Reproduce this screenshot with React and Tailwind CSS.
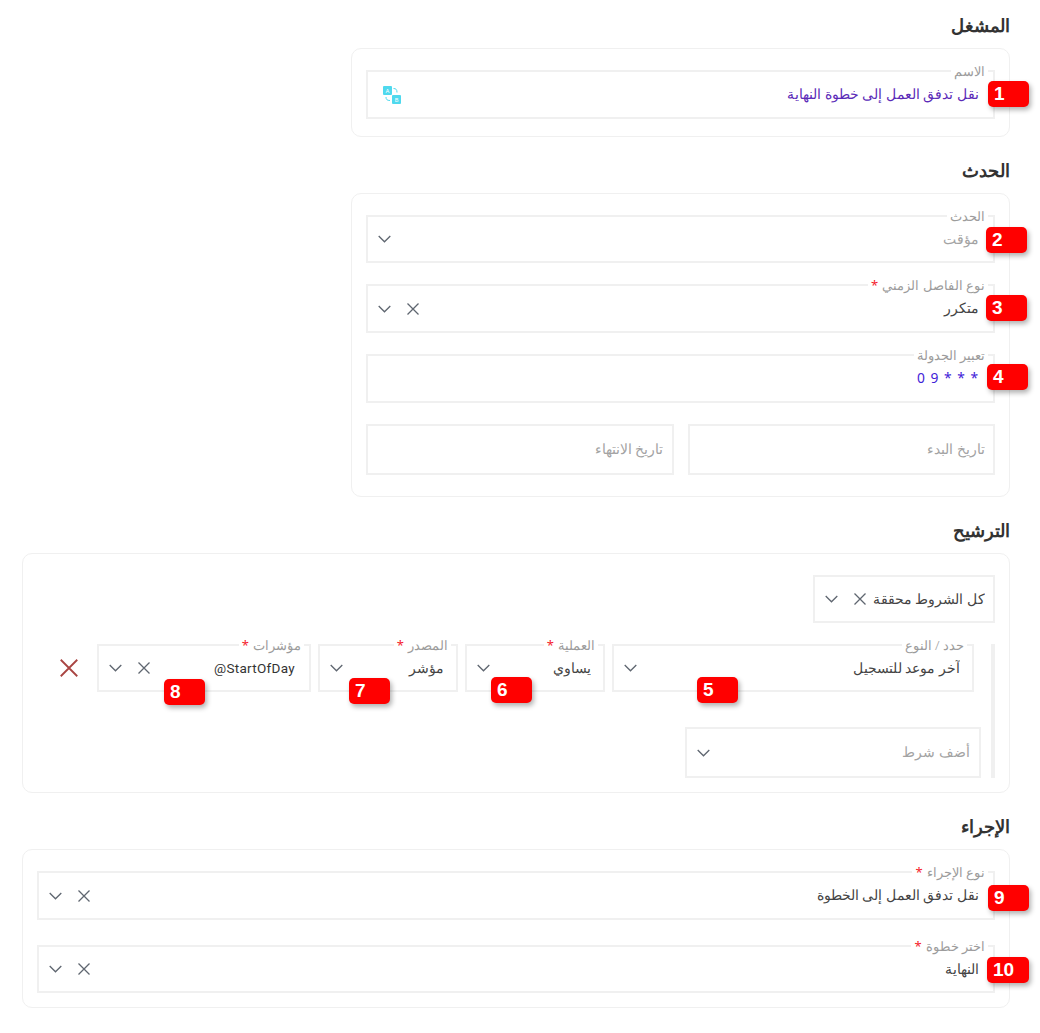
import React from "react";

const Chevron = () => (
  <svg width="13" height="8" viewBox="0 0 13 8" fill="none" className="shrink-0 text-[#5f6670]">
    <path d="M0.7 1l5.800 5.800L12.300 1" stroke="currentColor" strokeWidth="1.3" />
  </svg>
);

const Cross = ({ size = 12, className = "text-[#5f6670]", width = 1.3 }) => (
  <svg width={size} height={size} viewBox="0 0 12 12" fill="none" className={`shrink-0 ${className}`}>
    <path d="M0.5 0.5l11 11M11.5 0.5l-11 11" stroke="currentColor" strokeWidth={width} />
  </svg>
);

const TranslateIcon = () => (
  <svg width="18" height="18" viewBox="0 0 18 18" fill="none" className="shrink-0">
    <rect x="0" y="0" width="9" height="9" rx="1" fill="#4fd9ee" />
    <rect x="9" y="9" width="9" height="9" rx="1" fill="#4fd9ee" />
    <text x="4.5" y="6.500" fontSize="6" fill="#fff" textAnchor="middle" fontFamily="Roboto">A</text>
    <text x="13.5" y="15.500" fontSize="6" fill="#fff" textAnchor="middle" fontFamily="Roboto">B</text>
    <path d="M10.500 2.500c2.500 0 3.500 1 3.500 4M3 11c0 2.500 1 3.500 4 3.500" stroke="#4fd9ee" strokeWidth="1" />
  </svg>
);

const Badge = ({ n, className }) => (
  <div dir="ltr" className={`absolute z-10 h-[26px] rounded-[5px] bg-[#ff0000] pl-[6px] text-left text-[19px] font-bold leading-[25px] text-white shadow-[2px_3px_5px_rgba(0,0,0,0.3)] font-['Liberation_Sans',sans-serif] ${className}`}>
    {n}
  </div>
);

const Field = ({ label, required, value, valueClass = "text-[#444444]", clear, chevron = true, badge, badgeClass, height = "h-[49px]", width = "", pad = "pr-[14px]", children }) => (
  <div className={`relative flex items-center border-2 border-[#f0f0f0] pl-[10px] ${pad} ${height} ${width}`}>
    {label && (
      <span className="absolute -top-[10px] right-[5px] bg-white px-[3px] text-[13px] font-light leading-[18px] text-[#9c9c9c]">
        {label}
        {required && <span className="mr-[4px] font-normal text-[#f5222d]">*</span>}
      </span>
    )}
    <div className={`flex-1 truncate text-[13.800px] font-light ${valueClass}`}>{value}</div>
    {children}
    {clear && <span className="ml-4"><Cross /></span>}
    {chevron && <Chevron />}
    {badge && <Badge n={badge} className={badgeClass} />}
  </div>
);

const Section = ({ title, narrow, className, children }) => (
  <section className={narrow ? "w-[659px]" : "w-full"}>
    <h2 className="mb-[11px] h-[24px] text-[18px] font-bold leading-[24px] text-[#333333]">{title}</h2>
    <div className={`rounded-[10px] border border-[#f0f0f0] px-[14px] ${className}`}>{children}</div>
  </section>
);

export default function App() {
  return (
    <div dir="rtl" className="flex min-h-[1033px] w-[1040px] flex-col gap-[21px] bg-white pl-[22px] pr-[30px] pt-[13px] font-['Noto_Sans',Roboto,sans-serif]">
      <Section title="المشغل" narrow className="pb-[17px] pt-[21px]">
        <Field
          label="الاسم"
          value="نقل تدفق العمل إلى خطوة النهاية"
          valueClass="text-[#5b2bb8]"
          chevron={false}
          badge="1"
          badgeClass="-right-[36px] top-[9px] w-[41px]"
        >
          <span className="ml-[5px]"><TranslateIcon /></span>
        </Field>
      </Section>

      <Section title="الحدث" narrow className="flex flex-col gap-[21px] pb-[21px] pt-[21px]">
        <Field label="الحدث" value="مؤقت" valueClass="text-[#a3a3a3]" height="h-[48px]" badge="2" badgeClass="-right-[34px] top-[10px] w-[41px]" />
        <Field label="نوع الفاصل الزمني" required value="متكرر" clear badge="3" badgeClass="-right-[34px] top-[9px] w-[41px]" />
        <Field
          label="تعبير الجدولة"
          value={<span dir="ltr" className="font-normal tracking-[1px]">0 9 * * *</span>}
          valueClass="text-[#3f22d8]"
          chevron={false}
          badge="4"
          badgeClass="-right-[35px] top-[8px] w-[41px]"
        />
        <div className="grid grid-cols-2 gap-[14px]">
          <Field value="تاريخ البدء" valueClass="text-[#a3a3a3]" chevron={false} height="h-[51px]" pad="pr-[8px]" />
          <Field value="تاريخ الانتهاء" valueClass="text-[#a3a3a3]" chevron={false} height="h-[51px]" pad="pr-[8px]" />
        </div>
      </Section>

      <Section title="الترشيح" className="pb-[14px] pt-[21px]">
        <div className="flex">
          <Field value="كل الشروط محققة" clear height="h-[48px]" width="w-[182px]" pad="pr-[8px]" />
        </div>
        <div className="mt-[21px] border-r-[4px] border-[#f0f0f0] pr-[10px]">
          <div className="mr-[7px] flex items-center gap-[7px]">
            <Field label="حدد / النوع" value="آخر موعد للتسجيل" height="h-[48px]" width="w-[362px]" pad="pr-[12px]" badge="5" badgeClass="left-[83px] top-[31px] w-[41px]" />
            <Field label="العملية" required value="يساوي" height="h-[48px]" width="w-[140px]" pad="pr-[12px]" badge="6" badgeClass="left-[24px] top-[31px] w-[41px]" />
            <Field label="المصدر" required value="مؤشر" height="h-[48px]" width="w-[140px]" pad="pr-[12px]" badge="7" badgeClass="left-[29px] top-[32px] w-[41px]" />
            <Field
              label="مؤشرات"
              required
              value={<span dir="ltr" className="font-['Roboto',sans-serif] text-[13.500px] font-normal tracking-[0.3px] text-[#333333]">@StartOfDay</span>}
              clear
              height="h-[48px]"
              width="w-[214px]"
              pad="pr-[14px]"
              badge="8"
              badgeClass="left-[65px] top-[33px] w-[41px]"
            />
            <span className="mr-[12px]"><Cross size={18} width={1.2} className="text-[#a94442]" /></span>
          </div>
          <div className="mt-[35px] flex">
            <Field value="أضف شرط" valueClass="text-[#a3a3a3]" height="h-[51px]" width="w-[296px]" pad="pr-[9px]" />
          </div>
        </div>
      </Section>

      <Section title="الإجراء" className="flex flex-col gap-[25px] pb-[14px] pt-[21px]">
        <Field label="نوع الإجراء" required value="نقل تدفق العمل إلى الخطوة" clear badge="9" badgeClass="-right-[36px] top-[12px] w-[41px]" />
        <Field label="اختر خطوة" required value="النهاية" clear height="h-[48px]" badge="10" badgeClass="-right-[36px] top-[10px] w-[42px]" />
      </Section>
    </div>
  );
}
